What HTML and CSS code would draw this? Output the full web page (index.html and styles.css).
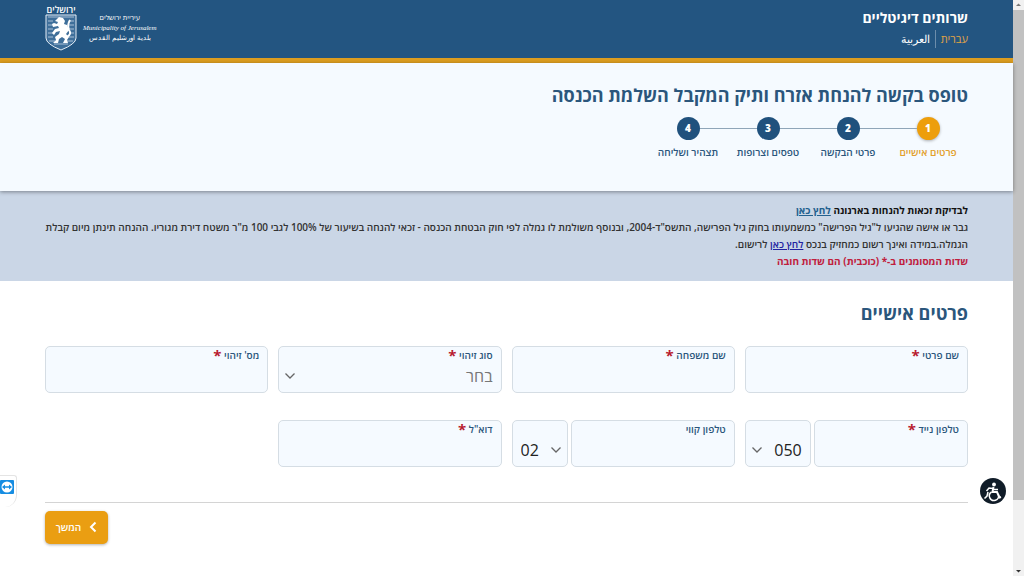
FILE: index.html
```html
<!DOCTYPE html>
<html lang="he" dir="rtl">
<head>
  <meta charset="UTF-8">
  <title>טופס בקשה להנחת אזרח ותיק</title>
  <link rel="stylesheet" href="styles.css">
</head>
<body>
  <div class="page">
    <header class="header">
      <div class="services">
        <div class="services-title">שרותים דיגיטליים</div>
        <nav class="languages">
          <a class="active" href="#he">עברית</a>
          <a href="#ar" lang="ar">العربية</a>
        </nav>
      </div>
      <div class="logo">
        <div class="logo-text">
          <span>עיריית ירושלים</span>
          <span class="logo-en" dir="ltr">Municipality of Jerusalem</span>
          <span lang="ar">بلدية اورشليم القدس</span>
        </div>
        <div class="emblem">
          <span>ירושלים</span>
          <svg viewBox="0 0 32 37" width="32" height="37">
            <path d="M1 1H31V24Q31 30 16 36Q1 30 1 24Z" fill="#3f6f9a" stroke="#e6eef6" stroke-width="1"/>
            <path d="M3 3H29M3 7H8M24 7H29M3 11H8M24 11H29M3 15H8M24 15H29M3 19H8M24 19H29M3 23H8M24 23H29M4 27H10M22 27H28M9 30H23" stroke="#a9c0d6" stroke-width="1"/>
            <path d="M12 5L14 3L18 4L20 7L19 10L22 11L24 16L21 20L24 23L22 26L23 29H18L20 25L17 23L14 25L13 29H8L11 26L10 23L14 20L15 17L11 18L9 21L7 19L10 15L14 14L13 12L8 13L7 10L9 9L12 10L13 8L10 7Z" fill="#fff"/>
            <path d="M22 23Q27 20 24 16Q22 11 25 6" fill="none" stroke="#fff" stroke-width="2"/>
          </svg>
        </div>
      </div>
    </header>

    <section class="intro">
      <h1>טופס בקשה להנחת אזרח ותיק המקבל השלמת הכנסה</h1>
      <ol class="steps">
        <li class="current"><b>1</b><span>פרטים אישיים</span></li>
        <li><b>2</b><span>פרטי הבקשה</span></li>
        <li><b>3</b><span>טפסים וצרופות</span></li>
        <li><b>4</b><span>תצהיר ושליחה</span></li>
      </ol>
    </section>

    <section class="info">
      <p class="strong">לבדיקת זכאות להנחות בארנונה <a href="#check">לחץ כאן</a></p>
      <p>גבר או אישה שהגיעו ל"גיל הפרישה" כמשמעותו בחוק גיל הפרישה, התשס"ד-2004, ובנוסף משולמת לו גמלה לפי חוק הבטחת הכנסה - זכאי להנחה בשיעור של 100% לגבי 100 מ"ר משטח דירת מגוריו. ההנחה תינתן מיום קבלת הגמלה.במידה ואינך רשום כמחזיק בנכס <a class="register" href="#register">לחץ כאן</a> לרישום.</p>
      <p class="required-note">שדות המסומנים ב-* (כוכבית) הם שדות חובה</p>
    </section>

    <main class="main">
      <h2>פרטים אישיים</h2>
      <form>
        <div class="fields">
          <div class="field">
            <label for="firstName">שם פרטי <i>*</i></label>
            <input type="text" id="firstName">
          </div>
          <div class="field">
            <label for="lastName">שם משפחה <i>*</i></label>
            <input type="text" id="lastName">
          </div>
          <div class="field">
            <label for="idType">סוג זיהוי <i>*</i></label>
            <select id="idType" class="empty">
              <option>בחר</option>
            </select>
          </div>
          <div class="field">
            <label for="idNumber">מס' זיהוי <i>*</i></label>
            <input type="text" id="idNumber">
          </div>
          <div class="phone">
            <div class="field">
              <label for="mobile">טלפון נייד <i>*</i></label>
              <input type="tel" id="mobile">
            </div>
            <div class="field prefix">
              <select id="mobilePrefix" aria-label="קידומת נייד">
                <option>050</option>
              </select>
            </div>
          </div>
          <div class="phone">
            <div class="field">
              <label for="landline">טלפון קווי</label>
              <input type="tel" id="landline">
            </div>
            <div class="field prefix area">
              <select id="areaCode" dir="ltr" aria-label="קידומת אזור">
                <option>02</option>
              </select>
            </div>
          </div>
          <div class="field">
            <label for="email">דוא"ל <i>*</i></label>
            <input type="email" id="email">
          </div>
        </div>
        <div class="actions">
          <button type="button" class="next">
            <svg viewBox="0 0 8 12" width="8" height="12"><path d="M6.500 1.500L2 6L6.500 10.500" fill="none" stroke="#fff" stroke-width="2"/></svg>
            המשך
          </button>
        </div>
      </form>
    </main>
  </div>

  <div class="scrollbar">
    <svg viewBox="0 0 11 10" width="11" height="10"><path d="M3 6L5.500 3.500L8 6Z" fill="#777"/></svg>
    <div class="thumb"></div>
    <svg viewBox="0 0 11 10" width="11" height="10"><path d="M3 4L5.500 6.500L8 4Z" fill="#333"/></svg>
  </div>

  <button type="button" class="accessibility" aria-label="נגישות">
    <svg viewBox="0 0 26 26" width="26" height="26" fill="none" stroke="#fff">
      <circle cx="14" cy="6.500" r="1.900" fill="#fff" stroke="none"/>
      <path d="M13.500 9L12.500 14H17L19.500 19.500L21 19" stroke-width="2"/>
      <path d="M13 10.500L9 10L6.500 13M14 11.500H18" stroke-width="1.500"/>
      <path d="M11.500 14A4.600 4.600 0 1 0 18.500 17" stroke-width="1.500"/>
      <path d="M8 14L7 18L4.500 20.500" stroke-width="1.500"/>
    </svg>
  </button>

  <div class="remote">
    <svg viewBox="0 0 14 14" width="14" height="14">
      <rect width="14" height="14" rx="1" fill="#168de2"/>
      <circle cx="7" cy="7" r="5.500" fill="#fff"/>
      <path d="M2 7L5 4.500V6.200H9V4.500L12 7L9 9.500V7.800H5V9.500Z" fill="#168de2"/>
    </svg>
  </div>
</body>
</html>
```
FILE: styles.css
```css
* {
  box-sizing: border-box;
}

body {
  margin: 0;
  display: flex;
  flex-direction: row-reverse;
  min-height: 100vh;
  font-family: "Open Sans", "Liberation Sans", sans-serif;
  font-size: 10px;
  color: #222;
  background-color: #fff;
}

.page {
  flex: 1;
  min-width: 0;
}

.header {
  display: flex;
  justify-content: space-between;
  height: 63px;
  padding: 6px 45px 0;
  background-color: #235581;
  border-bottom: 5px solid #dc9d20;
  color: #fff;
}

.services-title {
  font-size: 14px;
  line-height: 24px;
  font-weight: bold;
}

.languages {
  display: flex;
  align-items: center;
  line-height: 18px;
}

.languages a {
  color: #fff;
  font-size: 11px;
  text-decoration: none;
}

.languages a.active {
  color: #e0a446;
  padding-left: 5px;
  margin-left: 5px;
  border-left: 1px solid #6c8dab;
}

.logo {
  display: flex;
  gap: 6px;
}

.logo-text {
  display: flex;
  flex-direction: column;
  align-items: center;
  padding-top: 7px;
  font-size: 7px;
  line-height: 10px;
}

.logo-en {
  font-family: "Liberation Serif", serif;
  font-style: italic;
}

.emblem {
  display: flex;
  flex-direction: column;
  align-items: center;
  font-size: 9px;
  font-weight: 600;
  line-height: 8px;
}

.intro {
  position: relative;
  height: 128px;
  padding: 19px 45px 0;
  background-color: #f5faff;
  box-shadow: 0 1px 4px rgba(0, 0, 0, 0.4);
}

h1,
h2 {
  margin: 0;
  font-size: 18px;
  line-height: 26px;
  color: #2b567c;
}

.steps {
  display: flex;
  margin: 9px 0 0;
  padding: 0;
  list-style: none;
}

.steps li {
  position: relative;
  width: 80px;
  display: flex;
  flex-direction: column;
  align-items: center;
  gap: 4px;
  color: #2b567c;
  font-weight: 600;
  line-height: 16px;
  white-space: nowrap;
}

/* connecting line to the next step */
.steps li:not(:last-child)::after {
  content: "";
  position: absolute;
  top: 11px;
  left: -29px;
  width: 58px;
  height: 1px;
  background-color: #8fa5b8;
}

.steps b {
  width: 23px;
  height: 23px;
  border-radius: 50%;
  background-color: #20517d;
  color: #fff;
  line-height: 22px;
  text-align: center;
}

.steps .current {
  color: #e3a02c;
}

.steps .current b {
  background-color: #ed9e0c;
  box-shadow: 0 1px 3px rgba(0, 0, 0, 0.3);
}

.info {
  padding: 11px 45px;
  background-color: #cad6e6;
  color: #333;
  font-weight: 600;
  line-height: 17px;
}

.info p {
  margin: 0;
}

.info a {
  color: #24618f;
}

.info a.register {
  color: #2222a0;
}

.info .strong {
  font-weight: bold;
  color: #111;
}

.info .required-note {
  color: #c0203d;
  font-weight: bold;
}

.main {
  padding: 19px 45px 20px;
}

h2 {
  margin-bottom: 20px;
}

.fields {
  display: grid;
  grid-template-columns: repeat(4, 1fr);
  gap: 27px 10px;
  padding-bottom: 35px;
  border-bottom: 1px solid #d4d4d4;
}

.field {
  flex: 1;
  min-width: 0;
  height: 47px;
  display: flex;
  flex-direction: column;
  border: 1px solid #d5dde4;
  border-radius: 5px;
  background-color: #f5faff;
}

.field label {
  padding: 0 8px 1px;
  font-weight: 600;
  line-height: 16px;
  color: #2b567c;
}

.field label i {
  font-size: 15px;
  font-style: normal;
  font-weight: bold;
  line-height: 10px;
  vertical-align: -2px;
  color: #b81c30;
}

.field input,
.field select {
  width: 100%;
  height: 24px;
  padding: 0 8px;
  border: none;
  outline: none;
  background: transparent;
  font-family: inherit;
  font-size: 16px;
  color: #222;
}

.field select {
  appearance: none;
  background: url("data:image/svg+xml,%3Csvg xmlns='http://www.w3.org/2000/svg' width='10' height='6'%3E%3Cpath d='M.5.5L5 5L9.500.5' fill='none' stroke='%23666' stroke-width='1.300'/%3E%3C/svg%3E") no-repeat 6px center;
}

.field select.empty {
  color: #777;
}

.phone {
  display: flex;
  gap: 3px;
}

.phone .prefix {
  flex: 0 0 66px;
  justify-content: flex-end;
  padding-bottom: 4px;
}

.phone .area {
  flex-basis: 56px;
}

.phone .area select {
  background-position: right 6px center;
}

.actions {
  display: flex;
  justify-content: flex-end;
  padding-top: 8px;
}

.next {
  display: flex;
  align-items: center;
  justify-content: center;
  gap: 8px;
  min-width: 63px;
  height: 33px;
  padding: 0 10px 2px;
  border: none;
  border-radius: 5px;
  background-color: #ea9e12;
  box-shadow: 0 1px 3px rgba(0, 0, 0, 0.3);
  color: #fff;
  font-family: inherit;
  font-size: 10px;
  font-weight: 600;
}

.scrollbar {
  width: 11px;
  display: flex;
  flex-direction: column;
  background-color: #f1f1f1;
}

.scrollbar .thumb {
  flex: 0 0 85%;
  margin-bottom: auto;
  background-color: #c1c1c1;
}

.accessibility {
  position: fixed;
  right: 18px;
  bottom: 72px;
  width: 26px;
  height: 26px;
  padding: 0;
  border: none;
  border-radius: 50%;
  background-color: #101c28;
}

.remote {
  position: fixed;
  left: 0;
  bottom: 69px;
  height: 32px;
  padding: 4px 2px 0 0;
  border-top: 1px solid #e4e4e4;
  border-right: 1px solid #e4e4e4;
  border-radius: 0 3px 12px 0;
}
```
